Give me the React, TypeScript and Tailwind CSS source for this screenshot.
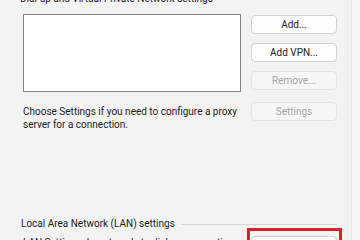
import React from "react";

const font = { fontFamily: 'Roboto, "Noto Sans", sans-serif' };

function Btn({ children, disabled }: { children: React.ReactNode; disabled?: boolean }) {
  return (
    <div
      className={
        "w-[86px] h-[19px] rounded-[4px] border flex items-center justify-center text-[10px] leading-none " +
        (disabled
          ? "bg-[#f6f6f6] border-[#e4e4e4] text-[#a3a3a3]"
          : "bg-[#fdfdfd] border-[#d2d2d2] text-[#1b1b1b]")
      }
    >
      {children}
    </div>
  );
}

export default function App() {
  return (
    <div className="w-[360px] h-[240px] overflow-hidden bg-[#f3f3f3] relative" style={font}>
      <div className="absolute left-[351px] top-0 w-[9px] h-[240px] bg-[#f7f7f7] border-l border-[#e6e6e6]" />
      <div className="pl-[20px] pr-[23px] mt-[-8px] text-[#1b1b1b] text-[10px]">
        <div className="h-[14px] leading-[14px] whitespace-nowrap">
          Dial-up and Virtual Private Network settings
        </div>
        <div className="flex mt-[8px] pl-[3px]">
          <div className="w-[218px] h-[78px] bg-white border border-[#838383]" />
          <div className="ml-[10px] flex flex-col gap-[9px] pt-[1px]">
            <Btn>Add...</Btn>
            <Btn>Add VPN...</Btn>
            <Btn disabled>Remove...</Btn>
          </div>
        </div>
        <div className="flex mt-[10px] pl-[3px] h-[28px]">
          <div className="w-[218px] leading-[13px] pt-[3px]">
            Choose Settings if you need to configure a proxy server for a connection.
          </div>
          <div className="ml-[10px]">
            <Btn disabled>Settings</Btn>
          </div>
        </div>
        <div className="flex items-center mt-[87px] pl-[1px] h-[14px]">
          <span className="whitespace-nowrap leading-[14px]">Local Area Network (LAN) settings</span>
          <div className="flex-1 ml-[6px] h-px bg-[#d5d5d5]" />
        </div>
        <div className="flex mt-[1px] pl-[3px]">
          <div className="w-[218px] leading-[13px] pt-[4px] whitespace-nowrap overflow-hidden">
            LAN Settings do not apply to dial-up connections.
          </div>
          <div className="ml-[10px] pt-[4px]">
            <Btn>LAN settings</Btn>
          </div>
        </div>
      </div>
      <div className="absolute left-[247px] top-[228px] w-[95px] h-[24px] border-[3px] border-[#d9202a]" />
    </div>
  );
}
